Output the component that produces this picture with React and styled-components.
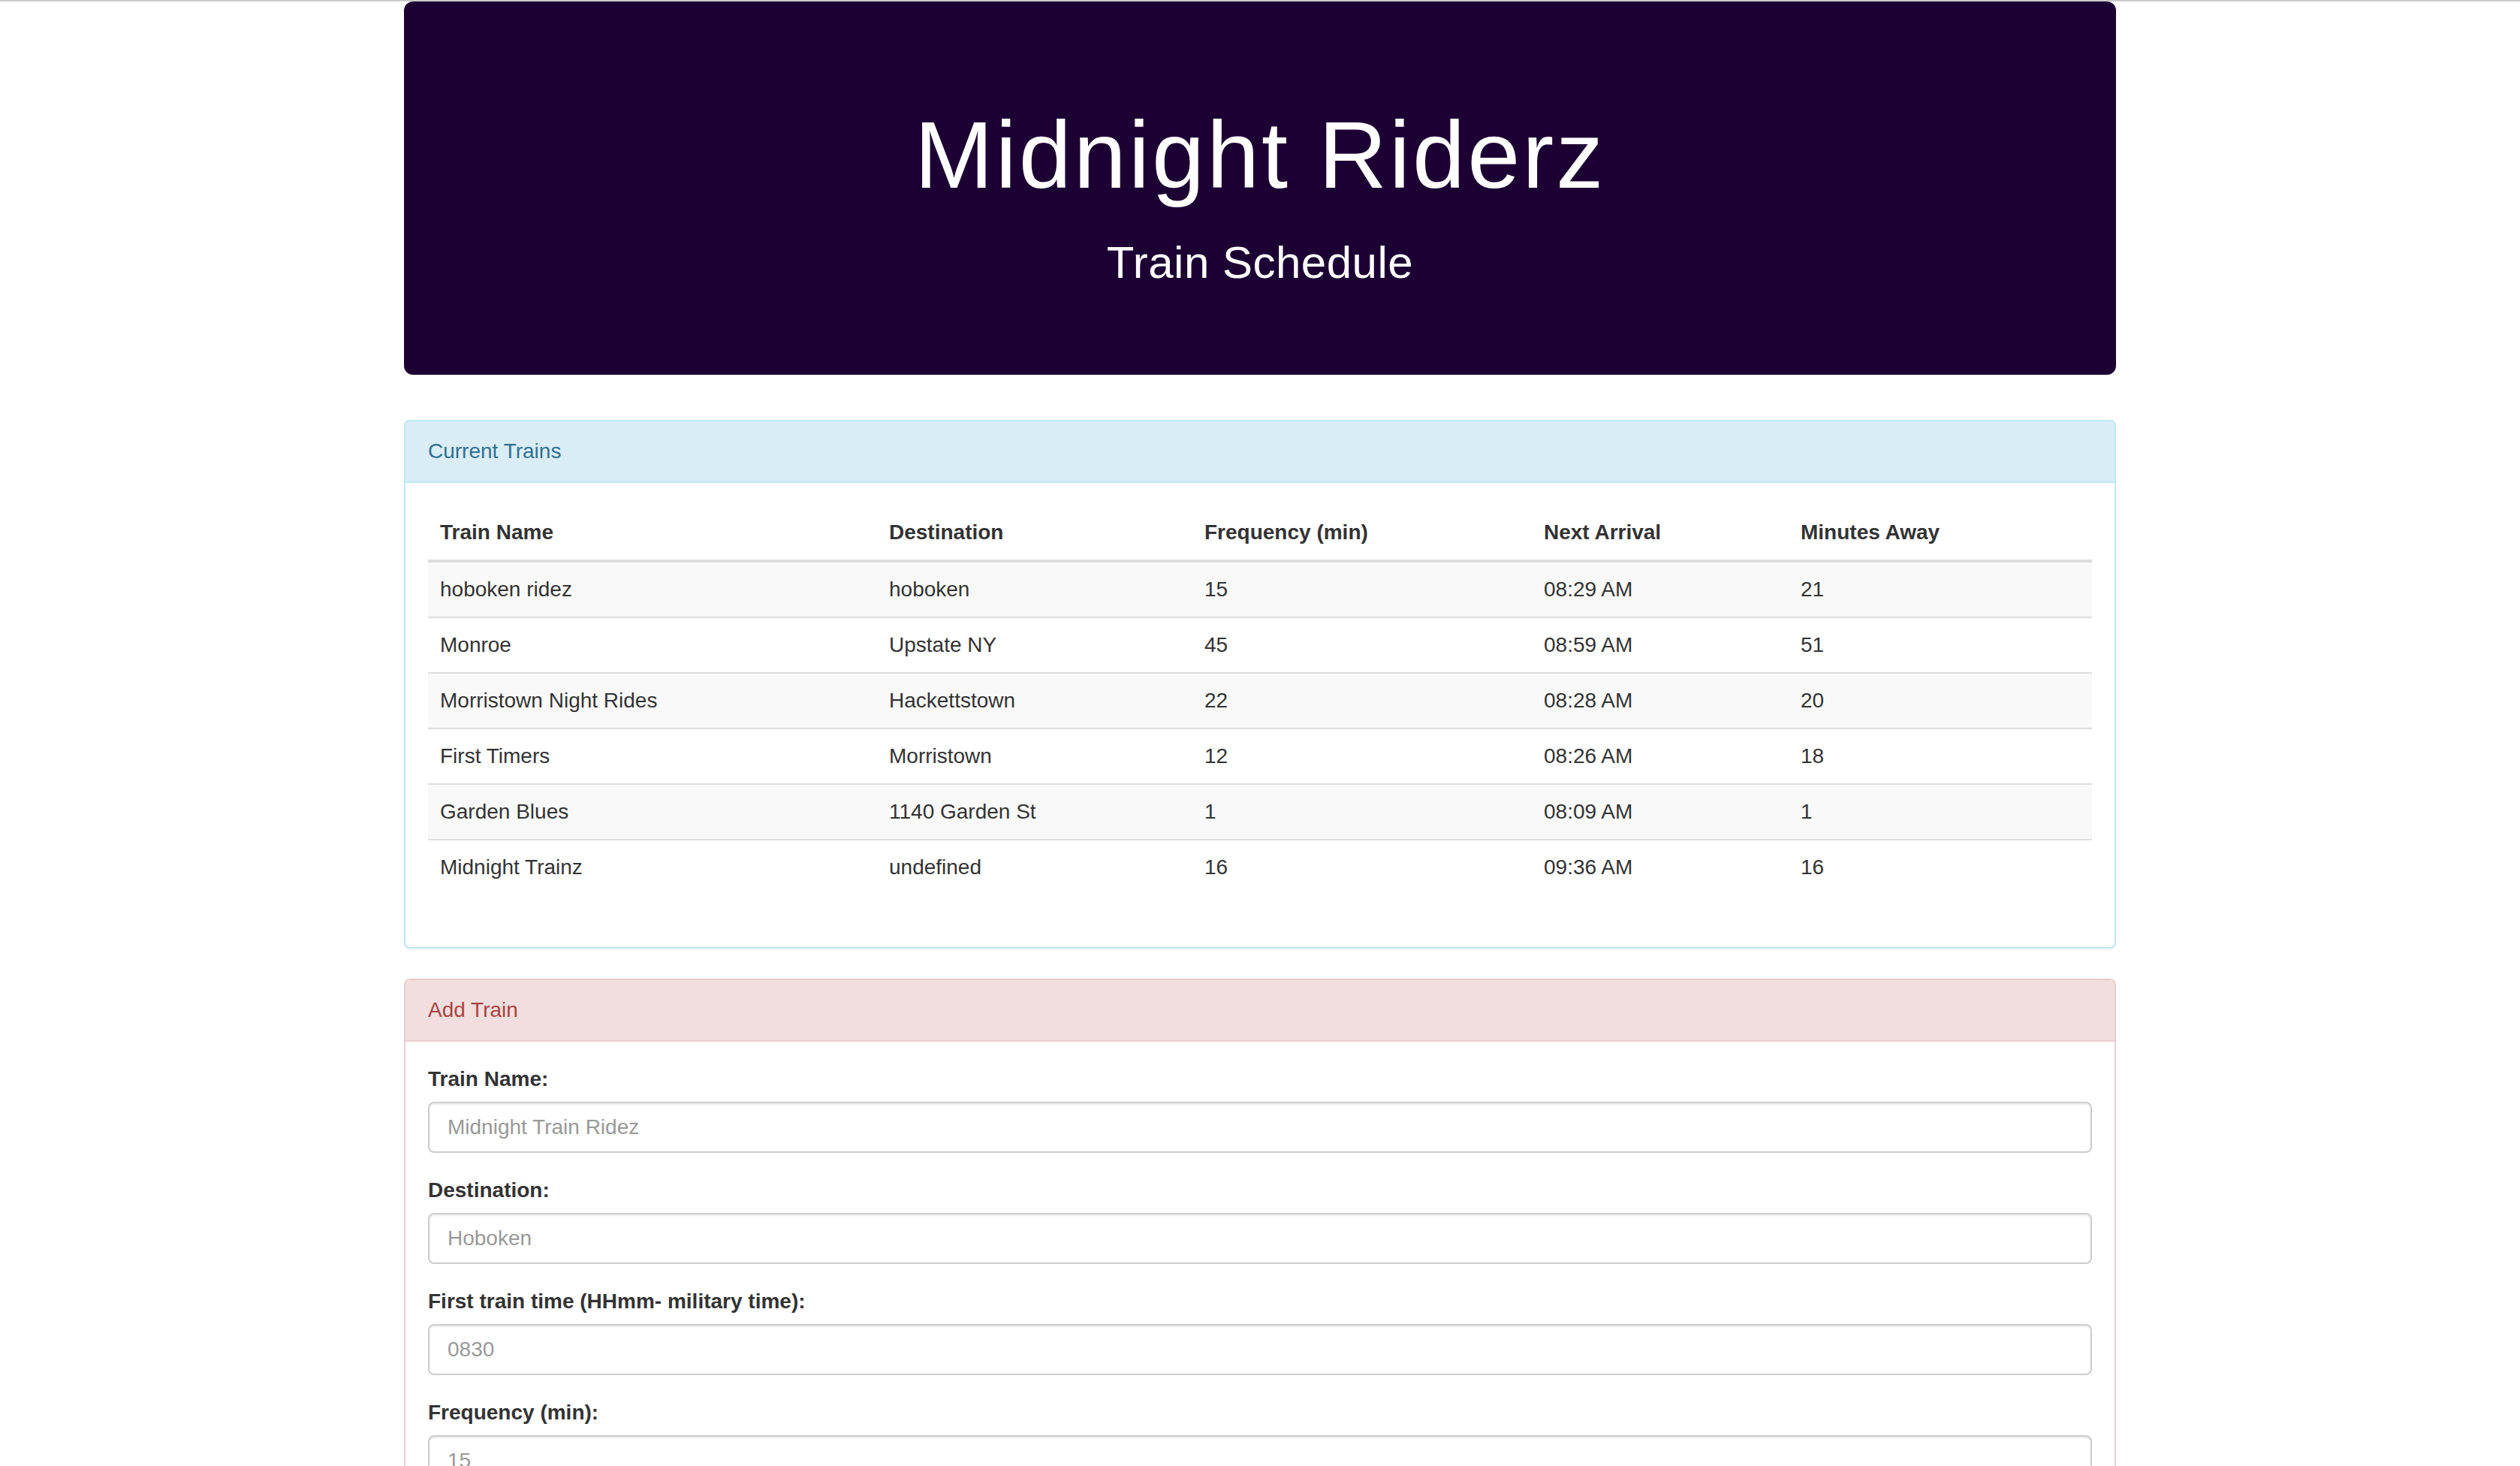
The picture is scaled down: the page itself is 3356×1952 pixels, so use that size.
import styled, { createGlobalStyle } from 'styled-components';

// screenshot is a 2x capture of a bootstrap 3 page, so every value here is doubled

const GlobalStyle = createGlobalStyle`
  * {
    box-sizing: border-box;
  }
  body {
    margin: 0;
    border-top: 2px solid #cbcbcb;
    background: #ffffff;
    font-family: "Liberation Sans", Arial, sans-serif;
    font-size: 28px;
    line-height: 40px;
    color: #333333;
  }
`;

const Container = styled.div`
  width: 2280px;
  margin: 0 auto;
`;

const Jumbotron = styled.header`
  background-color: #1d0033;
  color: #ffffff;
  text-align: center;
  border-radius: 12px;
  padding: 96px 120px;
  margin-bottom: 60px;
`;

const Title = styled.h1`
  font-size: 126px;
  font-weight: 500;
  line-height: 1.1;
  letter-spacing: 3px;
  margin: 40px 0 20px;
`;

const Subtitle = styled.h2`
  font-size: 60px;
  font-weight: 500;
  line-height: 1.1;
  letter-spacing: 0.5px;
  margin: 40px 0 20px;
`;

const tones = {
  info: { border: '#bce8f1', bg: '#d9edf7', text: '#31708f' },
  danger: { border: '#ebccd1', bg: '#f2dede', text: '#a94442' },
};

const Panel = styled.section`
  background: #ffffff;
  border: 2px solid ${(p) => tones[p.$tone].border};
  border-radius: 8px;
  box-shadow: 0 2px 2px rgba(0, 0, 0, 0.05);
  margin-bottom: 40px;
`;

const PanelHeading = styled.div`
  padding: 20px 30px;
  background: ${(p) => tones[p.$tone].bg};
  color: ${(p) => tones[p.$tone].text};
  border-bottom: 2px solid ${(p) => tones[p.$tone].border};
  border-radius: 6px 6px 0 0;
`;

const PanelBody = styled.div`
  padding: 30px;
`;

const Table = styled.table`
  width: 100%;
  border-collapse: collapse;
  border-spacing: 0;
  margin-bottom: 40px;
`;

const Th = styled.th`
  text-align: left;
  font-weight: bold;
  padding: 16px;
  line-height: 40px;
  vertical-align: bottom;
  border-bottom: 4px solid #dddddd;
`;

const Row = styled.tr`
  &:nth-child(odd) {
    background-color: #f9f9f9;
  }
`;

const Td = styled.td`
  padding: 16px;
  line-height: 40px;
  border-top: 2px solid #dddddd;
`;

const FormGroup = styled.div`
  margin-bottom: 30px;
`;

const Label = styled.label`
  display: inline-block;
  font-weight: bold;
  margin-bottom: 10px;
`;

const Input = styled.input`
  display: block;
  width: 100%;
  height: 68px;
  padding: 12px 24px;
  font-family: inherit;
  font-size: 28px;
  line-height: 40px;
  color: #555555;
  background: #ffffff;
  border: 2px solid #cccccc;
  border-radius: 8px;
  box-shadow: inset 0 2px 2px rgba(0, 0, 0, 0.075);
  outline: none;

  &::placeholder {
    color: #999999;
  }
`;

const SubmitButton = styled.button`
  font-family: inherit;
  font-size: 28px;
  line-height: 40px;
  padding: 12px 24px;
  color: #333333;
  background: #ffffff;
  border: 2px solid #cccccc;
  border-radius: 8px;
`;

const columns = [
  { label: 'Train Name', width: 598 },
  { label: 'Destination', width: 420 },
  { label: 'Frequency (min)', width: 452 },
  { label: 'Next Arrival', width: 342 },
  { label: 'Minutes Away' },
];

const trains = [
  ['hoboken ridez', 'hoboken', '15', '08:29 AM', '21'],
  ['Monroe', 'Upstate NY', '45', '08:59 AM', '51'],
  ['Morristown Night Rides', 'Hackettstown', '22', '08:28 AM', '20'],
  ['First Timers', 'Morristown', '12', '08:26 AM', '18'],
  ['Garden Blues', '1140 Garden St', '1', '08:09 AM', '1'],
  ['Midnight Trainz', 'undefined', '16', '09:36 AM', '16'],
];

const fields = [
  { id: 'train-name', label: 'Train Name:', placeholder: 'Midnight Train Ridez' },
  { id: 'destination', label: 'Destination:', placeholder: 'Hoboken' },
  { id: 'first-time', label: 'First train time (HHmm- military time):', placeholder: '0830' },
  { id: 'frequency', label: 'Frequency (min):', placeholder: '15' },
];

const App = () => {
  return (
    <>
      <GlobalStyle />
      <Container>
        <Jumbotron>
          <Title>Midnight Riderz</Title>
          <Subtitle>Train Schedule</Subtitle>
        </Jumbotron>

        <Panel $tone="info">
          <PanelHeading $tone="info">Current Trains</PanelHeading>
          <PanelBody>
            <Table>
              <colgroup>
                {columns.map((c) => (
                  <col key={c.label} style={c.width ? { width: c.width } : undefined} />
                ))}
              </colgroup>
              <thead>
                <tr>
                  {columns.map((c) => (
                    <Th key={c.label}>{c.label}</Th>
                  ))}
                </tr>
              </thead>
              <tbody>
                {trains.map((t) => (
                  <Row key={t[0]}>
                    {t.map((cell, i) => (
                      <Td key={i}>{cell}</Td>
                    ))}
                  </Row>
                ))}
              </tbody>
            </Table>
          </PanelBody>
        </Panel>

        <Panel $tone="danger">
          <PanelHeading $tone="danger">Add Train</PanelHeading>
          <PanelBody>
            <form onSubmit={(e) => e.preventDefault()}>
              {fields.map((f) => (
                <FormGroup key={f.id}>
                  <Label htmlFor={f.id}>{f.label}</Label>
                  <Input id={f.id} type="text" placeholder={f.placeholder} />
                </FormGroup>
              ))}
              <SubmitButton type="submit">Submit</SubmitButton>
            </form>
          </PanelBody>
        </Panel>
      </Container>
    </>
  );
};

export default App;
